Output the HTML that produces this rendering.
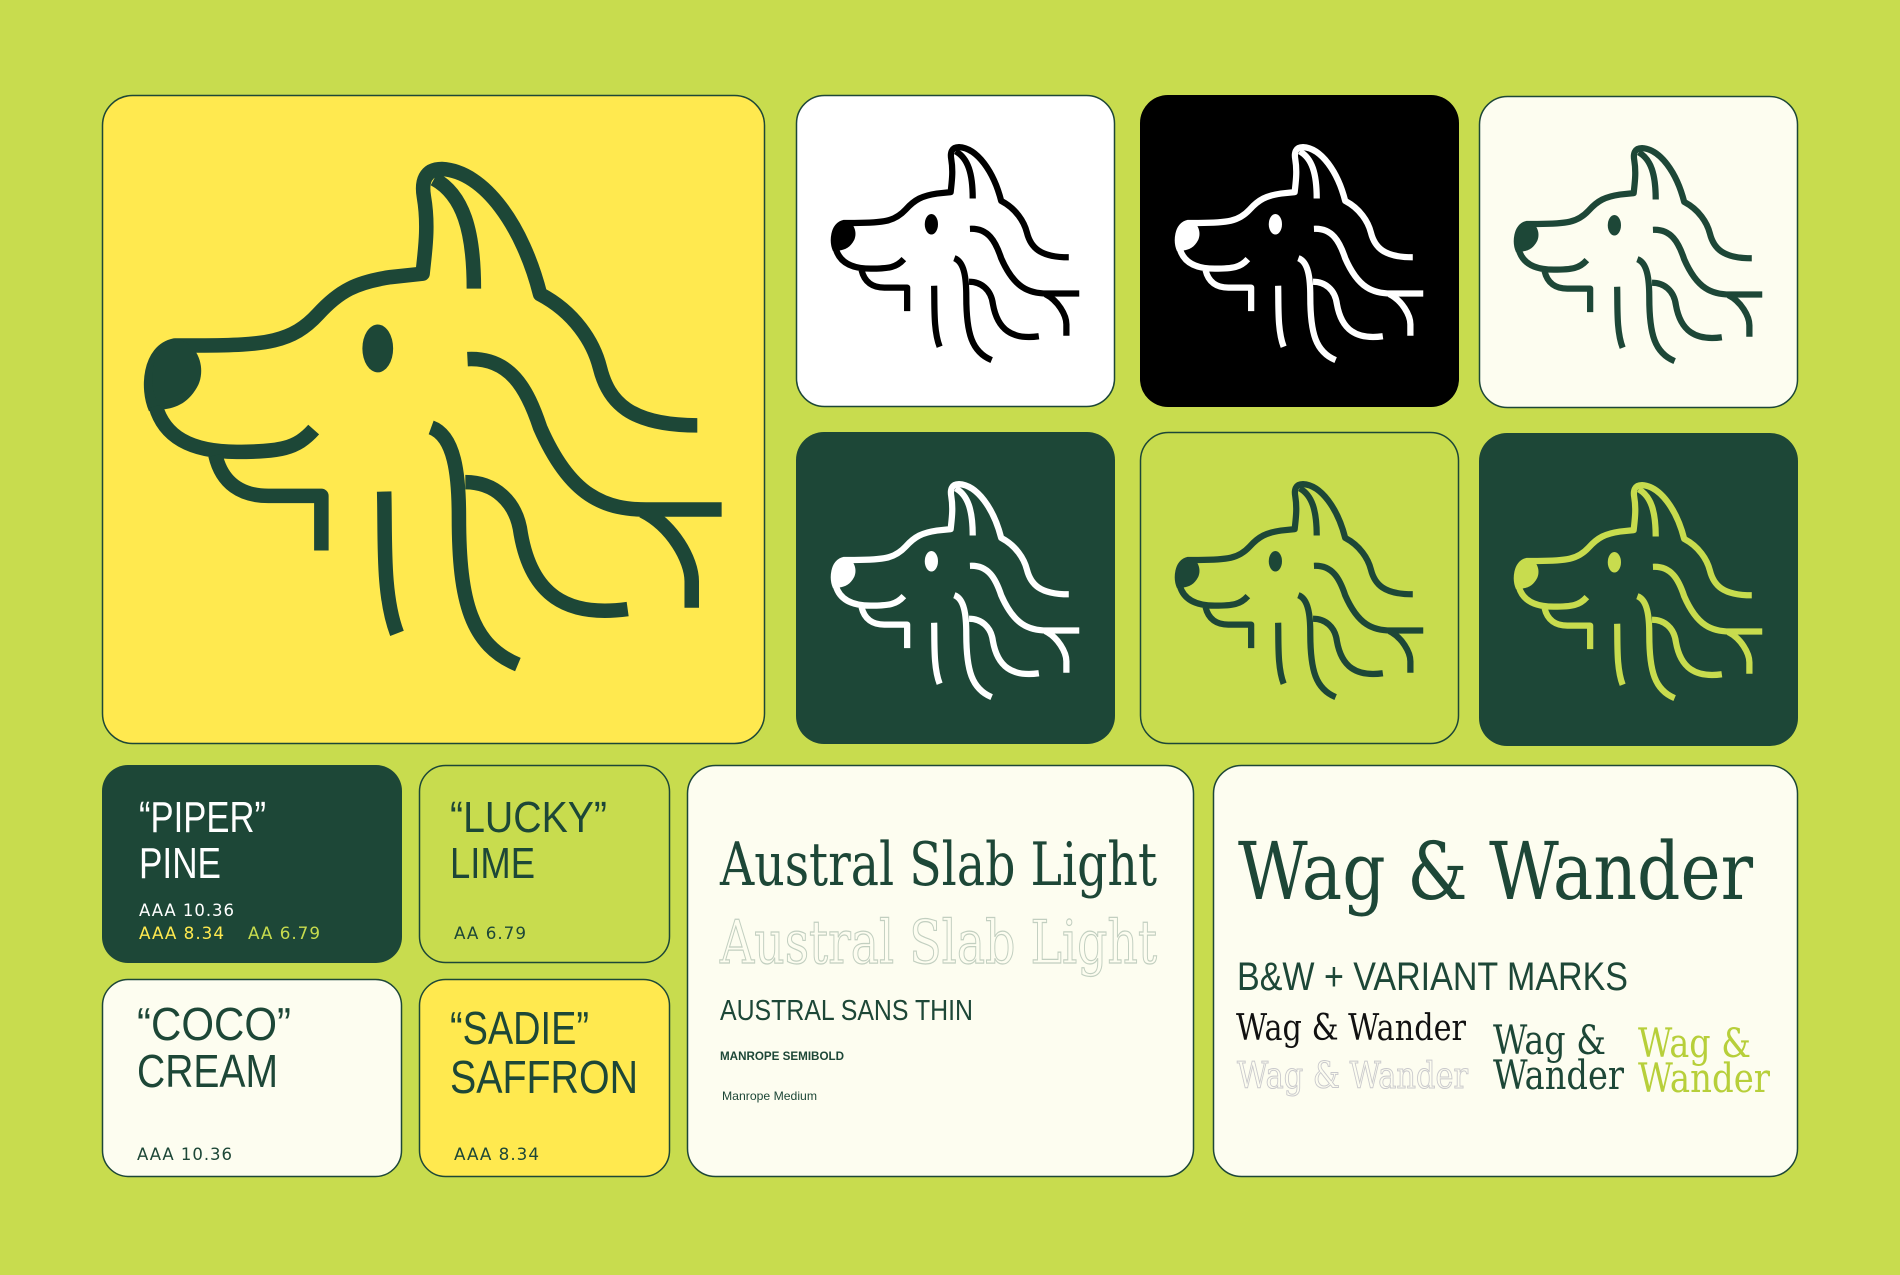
<!DOCTYPE html>
<html><head><meta charset="utf-8"><style>
html,body{margin:0;padding:0;background:#c8dc4e;}
svg{display:block}
</style></head><body>
<svg width="1900" height="1275" viewBox="0 0 1900 1275" xmlns="http://www.w3.org/2000/svg">
<defs>
<symbol id="dog" viewBox="0 0 1568 1545">
<g fill="none" stroke="currentColor" stroke-width="34" stroke-linejoin="round" stroke-linecap="butt">
<path d="M875,465 C875,330 850,245 782,208"/>
<path d="M1398,785 C1240,785 1190,730 1170,650 C1155,590 1110,520 1030,478 C990,320 900,190 800,185 C760,185 752,215 758,250 C770,320 760,380 755,430 L680,438 C600,450 560,470 510,525 C450,590 390,598 230,598 L175,598 C115,610 110,700 130,745"/>
<path d="M130,740 C150,810 210,847 320,847 C420,847 460,840 500,795"/>
<path d="M270,855 C285,920 330,952 400,950 L518,950 L518,1078"/>
<path d="M860,630 C960,625 1000,700 1030,790 C1100,950 1180,985 1290,982 L1455,982"/>
<path d="M1270,985 C1340,1020 1385,1100 1385,1150 L1385,1212"/>
<path d="M775,790 C830,810 840,900 840,1000 C840,1200 870,1300 978,1345"/>
<path d="M855,918 C920,918 975,960 985,1040 C1010,1180 1090,1235 1235,1215"/>
<path d="M665,940 C668,1050 660,1180 695,1272"/>
</g>
<g fill="currentColor">
<path d="M175,582 C230,590 248,650 230,690 C210,730 180,745 145,748 C110,700 110,610 175,582 Z"/>
<ellipse cx="650" cy="605" rx="36" ry="56"/>
</g>
</symbol>
</defs>

<rect x="102.5" y="95.5" width="662" height="648" rx="30" fill="#ffe94f" stroke="#1d4737" stroke-width="1.5"/>
<use href="#dog" x="100" y="90" width="670" height="660" style="color:#1d4737"/>

<rect x="796.5" y="95.5" width="318" height="311" rx="28" fill="#ffffff" stroke="#1d4737" stroke-width="1.5"/>
<use href="#dog" x="812" y="113" width="288" height="284" style="color:#000"/>
<rect x="1140" y="95" width="319" height="312" rx="28" fill="#000"/>
<use href="#dog" x="1156" y="113" width="288" height="284" style="color:#fff"/>
<rect x="1479.5" y="96.5" width="318" height="311" rx="28" fill="#fdfdf0" stroke="#1d4737" stroke-width="1.5"/>
<use href="#dog" x="1495" y="114" width="288" height="284" style="color:#1d4737"/>

<rect x="796" y="432" width="319" height="312" rx="28" fill="#1d4737"/>
<use href="#dog" x="812" y="450" width="288" height="284" style="color:#fff"/>
<rect x="1140.5" y="432.5" width="318" height="311" rx="28" fill="#c8dc4e" stroke="#1d4737" stroke-width="1.5"/>
<use href="#dog" x="1156" y="450" width="288" height="284" style="color:#1d4737"/>
<rect x="1479" y="433" width="319" height="313" rx="28" fill="#1d4737"/>
<use href="#dog" x="1495" y="451" width="288" height="284" style="color:#c8dc4e"/>

<rect x="102" y="765" width="300" height="198" rx="26" fill="#1d4737"/>
<rect x="419.5" y="765.5" width="250" height="197" rx="26" fill="#c8dc4e" stroke="#1d4737" stroke-width="1.5"/>
<rect x="102.5" y="979.5" width="299" height="197" rx="26" fill="#fdfdf0" stroke="#1d4737" stroke-width="1.5"/>
<rect x="419.5" y="979.5" width="250" height="197" rx="26" fill="#ffe94f" stroke="#1d4737" stroke-width="1.5"/>
<rect x="687.5" y="765.5" width="506" height="411" rx="28" fill="#fdfdf0" stroke="#1d4737" stroke-width="1.5"/>
<rect x="1213.5" y="765.5" width="584" height="411" rx="28" fill="#fdfdf0" stroke="#1d4737" stroke-width="1.5"/>

<g font-family="Liberation Sans, DejaVu Sans, sans-serif" font-weight="normal">
<text x="139" y="832" font-size="44" fill="#fff" textLength="127" lengthAdjust="spacingAndGlyphs">“PIPER”</text>
<text x="139" y="878" font-size="44" fill="#fff" textLength="82" lengthAdjust="spacingAndGlyphs">PINE</text>
<text x="450" y="832" font-size="44" fill="#1d4737" textLength="157" lengthAdjust="spacingAndGlyphs">“LUCKY”</text>
<text x="450" y="878" font-size="44" fill="#1d4737" textLength="85" lengthAdjust="spacingAndGlyphs">LIME</text>
<text x="137" y="1040" font-size="46" fill="#1d4737" textLength="154" lengthAdjust="spacingAndGlyphs">“COCO”</text>
<text x="137" y="1087" font-size="46" fill="#1d4737" textLength="141" lengthAdjust="spacingAndGlyphs">CREAM</text>
<text x="450" y="1044" font-size="46" fill="#1d4737" textLength="139" lengthAdjust="spacingAndGlyphs">“SADIE”</text>
<text x="450" y="1093" font-size="46" fill="#1d4737" textLength="188" lengthAdjust="spacingAndGlyphs">SAFFRON</text>
</g>
<g font-family="DejaVu Sans, Liberation Sans, sans-serif" font-size="17" letter-spacing="1">
<text x="139" y="916" fill="#fff" textLength="96" lengthAdjust="spacingAndGlyphs">AAA 10.36</text>
<text x="139" y="939" fill="#ffe94f" textLength="86" lengthAdjust="spacingAndGlyphs">AAA 8.34</text>
<text x="248" y="939" fill="#c8dc4e" textLength="73" lengthAdjust="spacingAndGlyphs">AA 6.79</text>
<text x="454" y="939" fill="#1d4737" textLength="73" lengthAdjust="spacingAndGlyphs">AA 6.79</text>
<text x="137" y="1160" fill="#1d4737" textLength="96" lengthAdjust="spacingAndGlyphs">AAA 10.36</text>
<text x="454" y="1160" fill="#1d4737" textLength="86" lengthAdjust="spacingAndGlyphs">AAA 8.34</text>
</g>

<g font-family="DejaVu Serif, Liberation Serif, serif">
<text x="720" y="885" font-size="60" fill="#1d4737" textLength="437" lengthAdjust="spacingAndGlyphs">Austral Slab Light</text>
<text x="720" y="963" font-size="60" fill="none" stroke="#c2cfc0" stroke-width="1.2" textLength="437" lengthAdjust="spacingAndGlyphs">Austral Slab Light</text>
</g>
<g font-family="Liberation Sans, sans-serif" fill="#1d4737">
<text x="720" y="1020" font-size="29" textLength="253" lengthAdjust="spacingAndGlyphs">AUSTRAL SANS THIN</text>
<text x="720" y="1060" font-size="12" font-weight="bold" textLength="124" lengthAdjust="spacingAndGlyphs">MANROPE SEMIBOLD</text>
<text x="722" y="1100" font-size="12" textLength="95" lengthAdjust="spacingAndGlyphs">Manrope Medium</text>
</g>

<g font-family="DejaVu Serif, Liberation Serif, serif">
<text x="1238" y="899" font-size="80" fill="#1d4737" textLength="515" lengthAdjust="spacingAndGlyphs">Wag &amp; Wander</text>
<text x="1236" y="1040" font-size="36" fill="#111" textLength="230" lengthAdjust="spacingAndGlyphs">Wag &amp; Wander</text>
<text x="1237" y="1088" font-size="36" fill="none" stroke="#c9c9cc" stroke-width="1" textLength="231" lengthAdjust="spacingAndGlyphs">Wag &amp; Wander</text>
<text x="1493" y="1054" font-size="40" fill="#1d4737" textLength="113" lengthAdjust="spacingAndGlyphs">Wag &amp;</text>
<text x="1493" y="1089" font-size="40" fill="#1d4737" textLength="131" lengthAdjust="spacingAndGlyphs">Wander</text>
<text x="1638" y="1057" font-size="40" fill="#b7cf3a" textLength="113" lengthAdjust="spacingAndGlyphs">Wag &amp;</text>
<text x="1638" y="1092" font-size="40" fill="#b7cf3a" textLength="132" lengthAdjust="spacingAndGlyphs">Wander</text>
</g>
<text x="1237" y="990" font-family="Liberation Sans, sans-serif" font-size="40" fill="#1d4737" textLength="391" lengthAdjust="spacingAndGlyphs">B&amp;W + VARIANT MARKS</text>
</svg>
</body></html>
